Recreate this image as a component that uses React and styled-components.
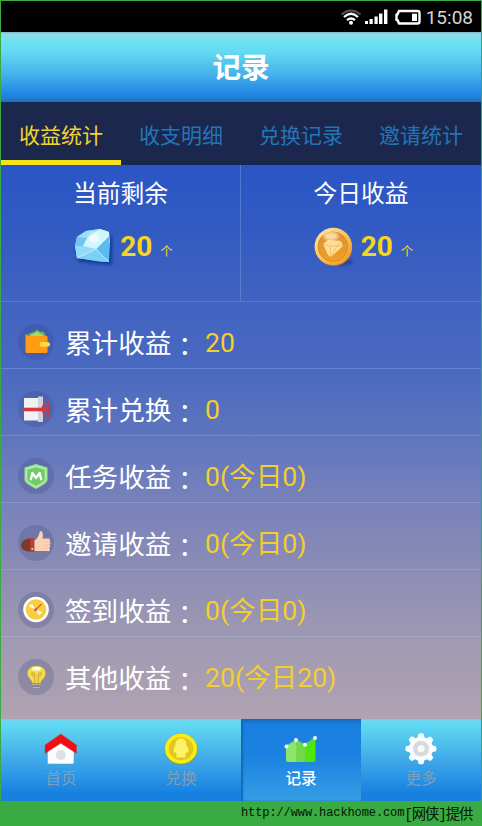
import React, { useState } from "react";
import styled, { createGlobalStyle } from "styled-components";

const tabs = ["收益统计", "收支明细", "兑换记录", "邀请统计"];

const records = [
  { id: 1, label: "累计收益", value: "20", icon: WalletIcon },
  { id: 2, label: "累计兑换", value: "0", icon: GiftIcon },
  { id: 3, label: "任务收益", value: "0(今日0)", icon: ShieldIcon },
  { id: 4, label: "邀请收益", value: "0(今日0)", icon: ThumbIcon },
  { id: 5, label: "签到收益", value: "0(今日0)", icon: ClockIcon },
  { id: 6, label: "其他收益", value: "20(今日20)", icon: BulbIcon },
];

const navItems = [
  { id: "home", label: "首页", icon: HomeIcon },
  { id: "exchange", label: "兑换", icon: CoinIcon },
  { id: "record", label: "记录", icon: ChartIcon },
  { id: "more", label: "更多", icon: GearIcon },
];

function StatusIcons() {
  return (
    <svg width="84" height="20" viewBox="0 0 84 20">
      {/* wifi */}
      <g fill="none" strokeLinecap="butt">
        <path d="M1.5 6.5 Q11 -1.5 20.5 6.5" stroke="#555" strokeWidth="2" />
        <path d="M4 9 Q11 2.5 18 9" stroke="#fff" strokeWidth="2.3" />
        <path d="M7 12.2 Q11 8.8 15 12.2" stroke="#fff" strokeWidth="2.3" />
      </g>
      <circle cx="11" cy="14.8" r="2" fill="#fff" />
      {/* signal */}
      <g fill="#fff">
        <rect x="25" y="13" width="3" height="3" />
        <rect x="29.5" y="11" width="3.2" height="5" />
        <rect x="34.5" y="8.5" width="3.2" height="7.5" />
        <rect x="39" y="5.5" width="3.4" height="10.5" />
        <rect x="44" y="1.5" width="3.4" height="14.5" />
      </g>
      {/* battery */}
      <path d="M59 3 H77.5 a2 2 0 0 1 2 2 V13.5 a2 2 0 0 1 -2 2 H59 L57.5 12 H56.5 V6.5 H57.5 Z" fill="none" stroke="#fff" strokeWidth="2.4" strokeLinejoin="round" />
      <rect x="72" y="5.7" width="5" height="7.3" fill="#fff" />
    </svg>
  );
}

function DiamondIcon() {
  return (
    <svg width="42" height="42" viewBox="0 0 42 42">
      <defs>
        <linearGradient id="gem" x1="0" y1="0" x2="1" y2="1">
          <stop offset="0" stopColor="#7fd0f5" />
          <stop offset=".45" stopColor="#c9f3fd" />
          <stop offset="1" stopColor="#3fb4ee" />
        </linearGradient>
        <filter id="gemShadow" x="-30%" y="-30%" width="160%" height="160%">
          <feGaussianBlur stdDeviation="1.8" />
        </filter>
      </defs>
      <path d="M3 22 L7 36 L40 39 L40 9 Z" fill="#0f338f" opacity=".8" filter="url(#gemShadow)" />
      <path d="M3 20 L5 11 L14 5 L28 3 L37 6 L38 14 L37 36 L30 36 L5 32 Z" fill="url(#gem)" />
      <path d="M5 11 L14 5 L28 3 L15 12 Z" fill="#9adff8" />
      <path d="M28 3 L37 6 L37 10 L24 23 L11 20 L15 12 Z" fill="#d0f6ff" />
      <path d="M3 20 L5 11 L15 12 L11 20 Z" fill="#6fc6f2" />
      <path d="M11 20 L24 23 L5 32 L3 20 Z" fill="#92dbf8" />
      <path d="M24 23 L37 36 L5 32 Z" fill="#7cd0f4" />
      <path d="M24 23 L37 10 L37 36 Z" fill="#5cbcee" />
      <path d="M5 32 L24 23 L37 36 M24 23 L37 10" stroke="#c6f2ff" strokeWidth=".8" fill="none" />
      <circle cx="22" cy="12" r="5" fill="#fff" opacity=".7" filter="url(#gemShadow)" />
    </svg>
  );
}

function GoldIcon() {
  return (
    <svg width="42" height="42" viewBox="0 0 42 42">
      <defs>
        <linearGradient id="goldRim" x1="0" y1="0" x2="1" y2="1">
          <stop offset="0" stopColor="#ffe9a2" />
          <stop offset=".5" stopColor="#f9c552" />
          <stop offset="1" stopColor="#e89024" />
        </linearGradient>
        <linearGradient id="goldFace" x1="0" y1="0" x2="0" y2="1">
          <stop offset="0" stopColor="#dc8f35" />
          <stop offset="1" stopColor="#f0a023" />
        </linearGradient>
        <filter id="goldBlur" x="-30%" y="-60%" width="160%" height="220%">
          <feGaussianBlur stdDeviation="1.5" />
        </filter>
      </defs>
      <ellipse cx="28" cy="36" rx="12" ry="3.5" fill="#1c3278" opacity=".6" filter="url(#goldBlur)" />
      <circle cx="20.8" cy="21.5" r="18.5" fill="#c87a20" />
      <circle cx="20.3" cy="20.5" r="18.7" fill="url(#goldRim)" />
      <circle cx="19.8" cy="20.5" r="14.8" fill="url(#goldFace)" stroke="#d98320" strokeWidth=".8" />
      <path d="M10 18 L15 14 L28 15 L30 20 L18 31 L15 29 Z" fill="#ffdf96" />
      <path d="M10 18 L17 20 L30 20 M17 20 L18 31 L24 20 L28 15" stroke="#f0b657" strokeWidth=".7" fill="none" />
      <ellipse cx="18" cy="10" rx="7.5" ry="4.5" fill="#fff3cf" opacity=".75" filter="url(#goldBlur)" />
    </svg>
  );
}

function WalletIcon() {
  return (
    <svg width="36" height="36" viewBox="0 0 36 36">
      <path d="M9 11 L14 8.500 L17 8 L19 5.500 L22 8 L25 7.500 L28 12 Z" fill="#6fbc55" />
      <path d="M11 12 L19 7.500 L26 12" fill="#a2dc6c" />
      <path d="M7.5 10 L11 12 H28.500 a1 1 0 0 1 1 1 V27.5 a1.5 1.5 0 0 1 -1.5 1.5 H9 a1.5 1.5 0 0 1 -1.5 -1.5 Z" fill="#ff9b12" />
      <rect x="21.500" y="18" width="10.5" height="4.800" rx="2.3" fill="#ffd84a" />
    </svg>
  );
}

function GiftIcon() {
  return (
    <svg width="36" height="36" viewBox="0 0 36 36">
      <rect x="6" y="7" width="16" height="22.500" fill="#f0f1f5" />
      <rect x="20" y="5.500" width="5" height="25.500" fill="#cfd2dc" />
      <path d="M24 17.500 L26.500 12.500 H31 V16.500 L29 18.500 L31 20.500 V25 L26.500 24.500 Z" fill="none" stroke="#c23a52" strokeWidth="1.800" />
      <rect x="6" y="16.700" width="23" height="3.600" fill="#d93640" />
    </svg>
  );
}

function ShieldIcon() {
  return (
    <svg width="36" height="36" viewBox="0 0 36 36">
      <path d="M18 6 L29.5 9.5 V22 Q29 25.5 18 31 Q7 25.5 6.500 22 V9.500 Z" fill="#9be592" />
      <path d="M18 8.600 L27.300 11.400 V21.500 Q27 24.200 18 28.400 Q9 24.200 8.700 21.500 V11.400 Z" fill="#70cc68" stroke="#d7f5d1" strokeWidth=".8" />
      <path d="M12.700 22.300 L14.400 15 L18 20 L21.600 15 L23.300 22.300" fill="none" stroke="#fff" strokeWidth="2.300" strokeLinejoin="round" />
    </svg>
  );
}

function ThumbIcon() {
  return (
    <svg width="36" height="36" viewBox="0 0 36 36">
      <path d="M14 13.500 Q4 13 3 20 Q3 26 12 26.500 H14 Z" fill="#7c392f" />
      <rect x="12" y="13" width="4.500" height="14" fill="#b9402e" />
      <path d="M16.500 15.500 Q20.500 13 21.500 7.500 Q22 5 24 6.500 Q25.500 9 24.500 13.500 H30 a1.700 1.700 0 0 1 1.400 3 a1.700 1.700 0 0 1 0 3.200 a1.700 1.700 0 0 1 -.5 3.200 a1.700 1.700 0 0 1 -1.400 3.100 H16.500 Z" fill="#fbd0b3" />
      <path d="M26.500 16.800 H31 M26.500 20 H31 M26.500 23.200 H30" stroke="#edbb9e" strokeWidth=".6" />
      <circle cx="14.300" cy="24" r="1" fill="#f6dd94" />
    </svg>
  );
}

function ClockIcon() {
  return (
    <svg width="36" height="36" viewBox="0 0 36 36">
      <circle cx="18" cy="17.500" r="12.800" fill="#fff" />
      <circle cx="18" cy="17.500" r="10.300" fill="#f5cf3f" />
      <path d="M17.500 17.500 L10.500 14.500 L14 11.500 Z M17.500 17.500 L24.500 20 L21 23.500 Z" fill="#fffae6" />
      <path d="M17 18.500 L23.500 12" stroke="#dc5a3a" strokeWidth="1.300" />
      <circle cx="17.500" cy="17.800" r="1.500" fill="#dc5a3a" />
    </svg>
  );
}

function BulbIcon() {
  return (
    <svg width="36" height="36" viewBox="0 0 36 36">
      <path d="M18.500 7 C12.500 7 9.500 10.500 9.500 14.500 C9.500 19 14 20.500 14.500 24 H22.500 C23 20.500 27.500 19 27.500 14.500 C27.500 10.500 24.500 7 18.500 7 Z" fill="#f3dc4b" />
      <path d="M16.800 23.500 V16.500 Q13.500 17.500 14 14 Q16.500 13 16.800 16.500 M20.200 23.500 V16.500 Q23.500 17.500 23 14 Q20.500 13 20.200 16.500" fill="none" stroke="#cba733" strokeWidth="1.100" />
      <ellipse cx="18.500" cy="9.800" rx="4.500" ry="2" fill="#fffad0" />
      <path d="M14 25.500 H23 M15 28.500 H22" stroke="#bcb5a2" strokeWidth="1.200" />
      <path d="M14 27 H23" stroke="#85808c" strokeWidth="1" />
    </svg>
  );
}

function HomeIcon() {
  return (
    <svg width="36" height="36" viewBox="0 0 36 36">
      <path d="M4.500 18 L18 8 L31 18 V31.500 a1.500 1.500 0 0 1 -1.500 1.500 H6 a1.500 1.500 0 0 1 -1.500 -1.500 Z" fill="#fcfdff" stroke="#6fa3c4" strokeWidth=".6" />
      <path d="M17.800 3 L33.500 14 V22.500 L17.800 12.300 L2 22.500 V14 Z" fill="#f20d14" stroke="#b5485a" strokeWidth=".5" />
      <circle cx="17.800" cy="24" r="5" fill="#dfe1e6" />
    </svg>
  );
}

function CoinIcon() {
  return (
    <svg width="36" height="36" viewBox="0 0 36 36">
      <ellipse cx="18" cy="18.200" rx="16.500" ry="15.500" fill="#8b9b45" />
      <ellipse cx="18" cy="17.700" rx="16" ry="15" fill="#f8ed16" />
      <ellipse cx="18" cy="17.700" rx="12.300" ry="11.500" fill="#e3c51b" />
      <path d="M18 7.500 C13.800 7.500 12.300 10.500 12.500 14 C10.500 17 10 20 11 22 L12.800 21 Q13 23 14 24 Q12 25.500 14 26.500 H22 Q24 25.500 22 24 Q23.300 23 23.400 21 L25 22 C26 20 25.500 17 23.500 14 C23.700 10.500 22.200 7.500 18 7.500 Z" fill="#fdf168" />
    </svg>
  );
}

function ChartIcon() {
  return (
    <svg width="36" height="36" viewBox="0 0 36 36">
      <path d="M3 15.500 L13 9.500 V31 H5 a2 2 0 0 1 -2 -2 Z" fill="#8be66a" />
      <path d="M13 9.500 L22 14 V31 H13 Z" fill="#72d94b" />
      <path d="M22 14 L32.500 7 V29 a2 2 0 0 1 -2 2 H22 Z" fill="#50e50c" />
      <path d="M3 15 L13 9 L22 13.500 L31.500 7" fill="none" stroke="#7bd276" strokeWidth="1" />
      <g fill="#f5fbff">
        <circle cx="3.500" cy="15.500" r="2" />
        <circle cx="13" cy="9" r="2" />
        <circle cx="22" cy="13.700" r="2" />
        <circle cx="32" cy="7" r="2" />
      </g>
    </svg>
  );
}

function GearIcon() {
  return (
    <svg width="36" height="36" viewBox="0 0 36 36">
      <g fill="#fafcff">
        <circle cx="18" cy="17.700" r="12" />
        {[0, 45, 90, 135].map((angle) => (
          <path key={angle} transform={`rotate(${angle} 18 17.7)`} d="M14.500 7 L15.500 2.800 Q18 1.500 20.500 2.800 L21.500 7 V28.500 L20.500 32.700 Q18 34 15.500 32.700 L14.500 28.500 Z" />
        ))}
      </g>
      <circle cx="18" cy="17.700" r="8" fill="#d9dadd" />
      <circle cx="18" cy="17.700" r="4.300" fill="#f7f8fa" stroke="#c9cbd0" strokeWidth=".8" />
    </svg>
  );
}

function App() {
  const [activeTab, setActiveTab] = useState(0);
  const [activeNav, setActiveNav] = useState("record");

  return (
    <Page>
      <GlobalStyle />
      <Phone>
        <StatusBar>
          <StatusIcons />
          <span>15:08</span>
        </StatusBar>
        <Header>记录</Header>

        <TabBar>
          {tabs.map((tab, index) => (
            <Tab key={tab} $active={index === activeTab} onClick={() => setActiveTab(index)}>
              {tab}
            </Tab>
          ))}
        </TabBar>

        <Content>
          <Summary>
            <SummaryCard>
              <SummaryTitle>当前剩余</SummaryTitle>
              <Amount>
                <DiamondIcon />
                <strong>20</strong>
                <Unit>个</Unit>
              </Amount>
            </SummaryCard>
            <SummaryCard>
              <SummaryTitle>今日收益</SummaryTitle>
              <Amount>
                <GoldIcon />
                <strong>20</strong>
                <Unit>个</Unit>
              </Amount>
            </SummaryCard>
          </Summary>

          {records.map(({ id, label, value, icon: Icon }) => (
            <RecordRow key={id}>
              <IconCircle>
                <Icon />
              </IconCircle>
              <Label>
                {label}
                <Colon>：</Colon>
              </Label>
              <Value>{value}</Value>
            </RecordRow>
          ))}
        </Content>

        <BottomNav>
          {navItems.map(({ id, label, icon: Icon }) => (
            <NavItem key={id} $active={id === activeNav} onClick={() => setActiveNav(id)}>
              <Icon />
              <span>{label}</span>
            </NavItem>
          ))}
        </BottomNav>
      </Phone>
      <Credit>
        http://www.hackhome.com<CreditName>[网侠]提供</CreditName>
      </Credit>
    </Page>
  );
}

const GlobalStyle = createGlobalStyle`
  * {
    box-sizing: border-box;
  }
  body {
    margin: 0;
    font-family: Roboto, "Noto Sans CJK SC", sans-serif;
  }
  svg {
    display: block;
    flex-shrink: 0;
  }
`;

const Page = styled.div`
  width: 482px;
  height: 826px;
  padding: 1px 1px 0;
  background: #3aaa42;
  overflow: hidden;
`;

const Phone = styled.div`
  height: 800px;
  display: flex;
  flex-direction: column;
`;

const StatusBar = styled.div`
  height: 31px;
  display: flex;
  align-items: center;
  justify-content: flex-end;
  padding: 2px 8px 0 0;
  background: #000;
  color: #d5d5d5;
  font-size: 19px;

  svg {
    margin: 1px 2px 0 0;
  }
`;

const Header = styled.header`
  height: 70px;
  display: flex;
  align-items: center;
  justify-content: center;
  padding-top: 2px;
  background: linear-gradient(#7fb8c2 0, #8bdce8 3%, #6ae0f5 17%, #64daf3 28%, #44b0e9 62%, #2289e7 87%, #217fd2 94%, #1b6fbd 100%);
  color: #fff;
  font-size: 28.6px;
  font-weight: 700;
  line-height: 40px;
`;

const TabBar = styled.div`
  height: 63px;
  display: grid;
  grid-template-columns: repeat(4, 1fr);
  background: #1c274e;
`;

const Tab = styled.button`
  display: flex;
  align-items: center;
  justify-content: center;
  padding: 9px 0 0;
  border: none;
  border-bottom: 5px solid ${(p) => (p.$active ? "#f7e31b" : "transparent")};
  background: none;
  color: ${(p) => (p.$active ? "#f3d32c" : "#2375b8")};
  font: 21px/30px Roboto, "Noto Sans CJK SC", sans-serif;
`;

const Content = styled.main`
  height: 554px;
  background: linear-gradient(#2a55c4 0, #325bc2 12%, #4163c0 25%, #4a69c0 37%, #5e75be 49%, #7882ba 61%, #8c8cb5 73%, #9e99b2 85%, #b0a3b1 100%);
`;

const Summary = styled.div`
  height: 137px;
  display: grid;
  grid-template-columns: 239px 1fr;
  border-bottom: 1px solid rgba(160, 185, 235, 0.25);
`;

const SummaryCard = styled.div`
  display: flex;
  flex-direction: column;
  align-items: center;
  padding-top: 11px;

  & + & {
    border-left: 1px solid rgba(130, 160, 225, 0.45);
  }
`;

const SummaryTitle = styled.div`
  color: #fff;
  font-size: 23.8px;
  line-height: 36px;
`;

const Amount = styled.div`
  display: flex;
  align-items: center;
  margin: 14px 0 0 4px;
  color: #f7d51d;

  strong {
    margin-left: 6px;
    font-size: 28px;
    line-height: 42px;
  }
`;

const Unit = styled.span`
  margin: 10px 0 0 8px;
  font-size: 12.5px;
  line-height: 16px;
`;

const RecordRow = styled.div`
  height: 67px;
  display: flex;
  align-items: center;
  padding: 13px 0 0 17px;
  font-size: 26.6px;
  line-height: 40px;

  &:not(:last-child) {
    border-bottom: 1px solid rgba(190, 205, 240, 0.27);
  }
`;

const IconCircle = styled.div`
  width: 36px;
  height: 36px;
  border-radius: 50%;
  background: rgba(58, 65, 120, 0.24);
`;

const Label = styled.span`
  width: 140px;
  margin-left: 11px;
  color: #fff;
  font-family: "Noto Sans CJK SC", sans-serif;
  white-space: nowrap;
`;

/* the TC face centres the full-width colon in its cell */
const Colon = styled.span`
  display: inline-block;
  font-family: "Noto Sans CJK TC", sans-serif;
  transform: translateY(3px);
`;

const Value = styled.span`
  padding-top: 2px;
  color: #f4cf2c;
  white-space: nowrap;
`;

const BottomNav = styled.nav`
  height: 82px;
  display: grid;
  grid-template-columns: repeat(4, 1fr);
`;

const NavItem = styled.button`
  display: flex;
  flex-direction: column;
  align-items: center;
  padding: 12px 0 0;
  border: none;
  background: ${(p) =>
    p.$active
      ? "linear-gradient(#1668ba 0, #197fe0 6%, #1b82e1 45%, #369fe5 100%)"
      : "linear-gradient(#7ccbe8 0, #62dbf4 4%, #5bd0f0 15%, #3ba4e7 55%, #1781e2 90%, #187fdc 100%)"};
  box-shadow: ${(p) => (p.$active ? "inset 2px 0 2px #1767b4" : "none")};
  color: ${(p) => (p.$active ? "#fff" : "#7f9fb9")};
  font: 15.6px/24px Roboto, "Noto Sans CJK SC", sans-serif;
  font-weight: ${(p) => (p.$active ? 500 : 400)};
`;

const Credit = styled.footer`
  display: flex;
  align-items: center;
  height: 25px;
  padding: 0 0 2px 240px;
  color: #041506;
  font-family: "Liberation Mono", monospace;
  font-size: 12px;
  letter-spacing: -0.1px;
  white-space: nowrap;
`;

const CreditName = styled.span`
  font-family: "Liberation Mono", "Noto Sans CJK SC", monospace;
  font-size: 14.3px;
  letter-spacing: -1.1px;
`;

export default App;
